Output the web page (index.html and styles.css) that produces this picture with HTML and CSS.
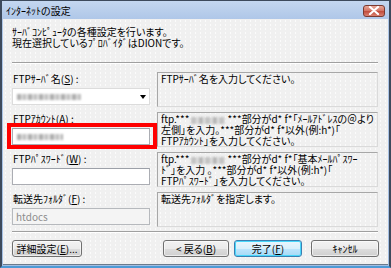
FILE: index.html
```html
<!DOCTYPE html>
<html lang="ja">
<head>
<meta charset="utf-8">
<title>ｲﾝﾀｰﾈｯﾄの設定</title>
<link rel="stylesheet" href="styles.css">
</head>
<body>
<div class="window">
  <div class="titlebar">
    <span class="title">ｲﾝﾀｰﾈｯﾄの設定</span>
    <span class="close"><svg width="12" height="9" viewBox="0 0 12 9"><path d="M2 1 L10 8 M10 1 L2 8" stroke="#fff" stroke-width="2.2" stroke-linecap="round"/></svg></span>
  </div>
  <div class="client">
    <div class="intro">
      <div>ｻｰﾊﾞｺﾝﾋﾟｭｰﾀの各種設定を行います。</div>
      <div>現在選択しているﾌﾟﾛﾊﾞｲﾀﾞはDIONです。</div>
    </div>
    <div class="sep"></div>
    <div class="form">
      <div class="field">
        <div class="label">FTPｻｰﾊﾞ名(<u>S</u>) :</div>
        <div class="combo"><span class="blur wide"></span><span class="arrow"></span></div>
      </div>
      <div class="desc">FTPｻｰﾊﾞ名を入力してください。</div>

      <div class="field">
        <div class="label">FTPｱｶｳﾝﾄ(<u>A</u>) :</div>
        <div class="input"><span class="blur mid"></span></div>
        <div class="redmark"></div>
      </div>
      <div class="desc">ftp.***<span class="blur inl"></span> ***部分がd* f*「ﾒｰﾙｱﾄﾞﾚｽの＠より<br>左側」を入力。***部分がd* f*以外(例:h*)「<br>FTPｱｶｳﾝﾄ」を入力してください。</div>

      <div class="field">
        <div class="label">FTPﾊﾟｽﾜｰﾄﾞ(<u>W</u>) :</div>
        <div class="input"></div>
      </div>
      <div class="desc">ftp.***<span class="blur inl"></span> ***部分がd* f*「基本ﾒｰﾙﾊﾟｽﾜｰ<br>ﾄﾞ」を入力 。***部分がd* f*以外(例:h*)「<br>FTPﾊﾟｽﾜｰﾄﾞ」を入力してください。</div>

      <div class="field">
        <div class="label">転送先ﾌｫﾙﾀﾞ(<u>F</u>) :</div>
        <div class="input disabled">htdocs</div>
      </div>
      <div class="desc">転送先ﾌｫﾙﾀﾞを指定します。</div>
    </div>
    <div class="sep sep2"></div>
    <div class="buttons">
      <span class="btn b-adv">詳細設定(<u>E</u>)...</span>
      <span class="spacer"></span>
      <span class="btn b-back">&lt; 戻る(<u>B</u>)</span>
      <span class="btn b-done">完了(<u>F</u>)</span>
      <span class="btn b-cancel">ｷｬﾝｾﾙ</span>
    </div>
  </div>
</div>
</body>
</html>
```

FILE: styles.css
```css
html, body {
  margin: 0;
  padding: 0;
  background: #6c93c4;
}
body {
  font-family: "Noto Sans CJK JP", "Noto Sans", sans-serif;
  font-size: 10px;
  line-height: 11px;
  color: #000;
  font-feature-settings: "palt";
}
.window {
  width: 391px;
  height: 268px;
  box-sizing: border-box;
  display: flex;
  flex-direction: column;
  background: linear-gradient(#c4d7f0, #afc7e8 18px, #a3bee2);
  border-left: 2px solid #3d4a5c;
  border-right: 2px solid #3d4a5c;
  border-top: 1px solid #3d4a5c;
  border-bottom: 2px solid #4d9ad6;
}
.titlebar {
  height: 18px;
  display: flex;
  align-items: center;
  padding: 0 4px 0 4px;
  flex: none;
}
.title {
  font-size: 10px;
  color: #000;
  margin-top: 1px;
}
.close {
  margin-left: auto;
  width: 22px;
  height: 12px;
  box-sizing: border-box;
  border: 1px solid #7a3a30;
  border-radius: 3px;
  background: linear-gradient(#e9a99a, #d17060 50%, #c04a3a 51%, #d98070);
  display: flex;
  align-items: center;
  justify-content: center;
  margin-top: 1px;
}
.close svg { display: block; }
.client {
  flex: 1;
  margin: 0 1px 1px 1px;
  background-color: #f0f0f0;
  background-image: radial-gradient(circle, #fbfbfb 0.6px, transparent 0.8px);
  background-size: 5px 4px;
  border-bottom: 1px solid #6a7a8c;
  display: flex;
  flex-direction: column;
  padding: 7px 9px 0 8px;
}
.intro {
  padding-left: 1px;
}
.sep {
  margin: 14px 0 0 1px;
  height: 1px;
  background: #a0a0a0;
  border-bottom: 1px solid #fff;
  width: 366px;
}
.form {
  margin-top: 8px;
  display: grid;
  grid-template-columns: 138px 221px;
  grid-auto-rows: 35px;
  column-gap: 7px;
  row-gap: 5px;
  padding-left: 1px;
}
.field {
  position: relative;
  display: flex;
  flex-direction: column;
}
.label {
  height: 11px;
  margin-top: 1px;
  padding-left: 1px;
}
.combo, .input {
  margin-top: 4px;
  height: 17px;
  box-sizing: border-box;
  background: #fff;
  border: 1px solid #abadb3;
  border-top-color: #9ca0a8;
  display: flex;
  align-items: center;
  padding-left: 3px;
}
.combo {
  border-color: #dcdcdc;
}
.arrow {
  margin-left: auto;
  margin-right: 3px;
  width: 0;
  height: 0;
  border-left: 3.5px solid transparent;
  border-right: 3.5px solid transparent;
  border-top: 4px solid #000;
}
.input.disabled {
  background: #f4f4f4;
  border-color: #b6b9bd;
  color: #8d8d8d;
}
.blur {
  display: inline-block;
  height: 6px;
  background: repeating-linear-gradient(90deg, #9a9a9a 0 4px, #d4d4d4 4px 6px, #b0b0b0 6px 9px, #e2e2e2 9px 11px);
  filter: blur(1.2px);
  opacity: 0.8;
}
.blur.wide { width: 64px; margin-left: 1px; }
.blur.mid { width: 46px; margin-left: 1px; }
.blur.inl { width: 34px; margin-left: 2px; height: 7px; vertical-align: -1px; background: repeating-linear-gradient(90deg, #b8b8b8 0 5px, #dadada 5px 8px, #a8a8a8 8px 12px, #e6e6e6 12px 14px); }
.desc {
  box-sizing: border-box;
  border: 1px solid #a7a7a7;
  border-right-color: #dadada;
  border-bottom-color: #dadada;
  background: transparent;
  padding: 0 2px 0 3px;
  white-space: nowrap;
  overflow: hidden;
  line-height: 11px;
}
.redmark {
  position: absolute;
  left: -5px;
  top: 11px;
  width: 150px;
  height: 26px;
  box-sizing: border-box;
  border: 4px solid #ff0000;
}
.sep2 {
  margin-top: 4px;
}
.buttons {
  margin-top: 7px;
  display: flex;
  padding-left: 1px;
}
.spacer { flex: 1; }
.btn {
  height: 17px;
  box-sizing: border-box;
  border: 1px solid #707070;
  border-radius: 3px;
  background: linear-gradient(#f2f2f2, #ebebeb 50%, #dddddd 51%, #cfcfcf);
  display: flex;
  align-items: center;
  justify-content: center;
  box-shadow: inset 0 0 0 1px rgba(255,255,255,0.6);
}
.b-adv { width: 70px; }
.b-back { width: 66px; }
.b-done {
  width: 68px;
  margin-left: 5px;
  border-color: #3c7fb1;
  background: linear-gradient(#eaf6fd, #d9f0fc 50%, #bee6fd 51%, #a7d9f5);
  box-shadow: inset 0 0 0 1px #48d7fb;
}
.b-cancel { width: 68px; margin-left: 9px; }
u { text-underline-offset: 1px; }
```
